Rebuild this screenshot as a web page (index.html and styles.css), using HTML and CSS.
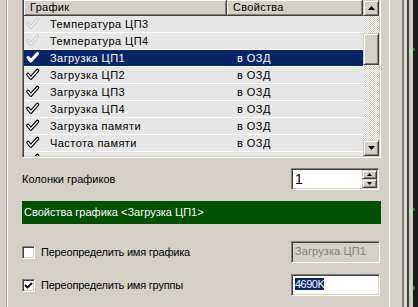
FILE: index.html
```html
<!DOCTYPE html>
<html lang="ru">
<head>
<meta charset="utf-8">
<link rel="stylesheet" href="styles.css">
</head>
<body>
<div class="frame">
  <div class="gutter-left"><div class="gl-shadow"></div><div class="gl-light"></div></div>
  <div class="main">
    <div class="list sunken">
      <div class="grid">
        <div class="head">
          <div class="hc hc1">График</div>
          <div class="hc hc2">Свойства</div>
        </div>
        <div class="row">
          <div class="c1"><svg class="chk dis" viewBox="0 0 16 16"><path class="o" d="M3 7.5 L5.8 11 L12.5 3.5"/><path class="i" d="M3 7.5 L5.8 11 L12.5 3.5"/></svg><span>Температура ЦП3</span></div>
          <div class="c2"></div>
        </div>
        <div class="row">
          <div class="c1"><svg class="chk dis" viewBox="0 0 16 16"><path class="o" d="M3 7.5 L5.8 11 L12.5 3.5"/><path class="i" d="M3 7.5 L5.8 11 L12.5 3.5"/></svg><span>Температура ЦП4</span></div>
          <div class="c2"></div>
        </div>
        <div class="row sel">
          <div class="c1"><svg class="chk on" viewBox="0 0 16 16"><path class="o" d="M3 7.5 L5.8 11 L12.5 3.5"/></svg><span>Загрузка ЦП1</span></div>
          <div class="c2">в ОЗД</div>
        </div>
        <div class="row">
          <div class="c1"><svg class="chk" viewBox="0 0 16 16"><path class="o" d="M3 7.5 L5.8 11 L12.5 3.5"/><path class="i" d="M3 7.5 L5.8 11 L12.5 3.5"/></svg><span>Загрузка ЦП2</span></div>
          <div class="c2">в ОЗД</div>
        </div>
        <div class="row">
          <div class="c1"><svg class="chk" viewBox="0 0 16 16"><path class="o" d="M3 7.5 L5.8 11 L12.5 3.5"/><path class="i" d="M3 7.5 L5.8 11 L12.5 3.5"/></svg><span>Загрузка ЦП3</span></div>
          <div class="c2">в ОЗД</div>
        </div>
        <div class="row">
          <div class="c1"><svg class="chk" viewBox="0 0 16 16"><path class="o" d="M3 7.5 L5.8 11 L12.5 3.5"/><path class="i" d="M3 7.5 L5.8 11 L12.5 3.5"/></svg><span>Загрузка ЦП4</span></div>
          <div class="c2">в ОЗД</div>
        </div>
        <div class="row">
          <div class="c1"><svg class="chk" viewBox="0 0 16 16"><path class="o" d="M3 7.5 L5.8 11 L12.5 3.5"/><path class="i" d="M3 7.5 L5.8 11 L12.5 3.5"/></svg><span>Загрузка памяти</span></div>
          <div class="c2">в ОЗД</div>
        </div>
        <div class="row">
          <div class="c1"><svg class="chk" viewBox="0 0 16 16"><path class="o" d="M3 7.5 L5.8 11 L12.5 3.5"/><path class="i" d="M3 7.5 L5.8 11 L12.5 3.5"/></svg><span>Частота памяти</span></div>
          <div class="c2">в ОЗД</div>
        </div>
        <div class="row">
          <div class="c1"><svg class="chk" viewBox="0 0 16 16"><path class="o" d="M3 7.5 L5.8 11 L12.5 3.5"/><path class="i" d="M3 7.5 L5.8 11 L12.5 3.5"/></svg></div>
          <div class="c2"></div>
        </div>
      </div>
      <div class="vscroll">
        <div class="sbtn raised"><svg viewBox="0 0 7 4" class="arr"><path d="M3.5 0 L7 4 L0 4 Z"/></svg></div>
        <div class="track track-top"></div>
        <div class="thumb raised"></div>
        <div class="track track-fill"></div>
        <div class="sbtn raised"><svg viewBox="0 0 7 4" class="arr"><path d="M0 0 L7 0 L3.5 4 Z"/></svg></div>
      </div>
    </div>

    <div class="field-row spin-row">
      <span class="label">Колонки графиков</span>
      <div class="spin sunken">
        <span class="spin-val">1</span>
        <div class="spin-btns">
          <div class="spbtn raised"><svg viewBox="0 0 5 3" class="sarr"><path d="M2.5 0 L5 3 L0 3 Z"/></svg></div>
          <div class="spbtn raised"><svg viewBox="0 0 5 3" class="sarr"><path d="M0 0 L5 0 L2.5 3 Z"/></svg></div>
        </div>
      </div>
    </div>

    <div class="banner">Свойства графика &lt;Загрузка ЦП1&gt;</div>

    <div class="field-row opt-row first">
      <label class="opt"><span class="cbox sunken"></span><span>Переопределить имя графика</span></label>
      <div class="tbox sunken disabled">Загрузка ЦП1</div>
    </div>
    <div class="field-row opt-row second">
      <label class="opt"><span class="cbox sunken"><svg viewBox="0 0 9 9" class="tick"><path d="M1 4 L3.5 6.5 L8 2"/></svg></span><span>Переопределить имя группы</span></label>
      <div class="tbox sunken"><span class="hl">4690K</span></div>
    </div>
  </div>
  <div class="gutter-right">
    <div class="gr-a"></div>
    <div class="gr-white"></div>
    <div class="gr-b"></div>
    <div class="gr-dark"></div>
    <div class="gr-c"></div>
    <div class="gr-light"></div>
    <div class="gr-d"></div>
    <div class="gr-black"></div>
    <div class="gr-e"></div>
    <div class="gr-win"></div>
  </div>
</div>
</body>
</html>
```

FILE: styles.css
```css
* { box-sizing: border-box; }
html, body {
  margin: 0;
  padding: 0;
  width: 418px;
  height: 307px;
  overflow: hidden;
  background: #d4d0c8;
  font-family: "Liberation Sans", Arial, sans-serif;
  font-size: 11px;
  color: #000;
}
.frame {
  display: flex;
  height: 307px;
}
.gutter-left {
  width: 22px;
  flex: none;
  display: flex;
  padding-left: 6px;
}
.gl-shadow { width: 1px; background: #a8a49c; }
.gl-light { width: 1px; background: #ffffff; }

.main {
  width: 359px;
  flex: none;
  display: flex;
  flex-direction: column;
}

.sunken {
  border: 1px solid;
  border-color: #808080 #ffffff #ffffff #808080;
  box-shadow: inset 1px 1px #404040, inset -1px -1px #d4d0c8;
}
.raised {
  border: 1px solid;
  border-color: #d4d0c8 #404040 #404040 #d4d0c8;
  box-shadow: inset 1px 1px #ffffff, inset -1px -1px #808080;
  background: #d4d0c8;
}

.list {
  margin-top: -2px;
  height: 160px;
  display: flex;
  padding: 1px;
  background: #e6e6e6;
}
.grid {
  flex: 1;
  overflow: hidden;
  display: flex;
  flex-direction: column;
}
.head {
  display: flex;
  height: 16px;
  flex: none;
  background: #d4d0c8;
}
.hc {
  height: 16px;
  line-height: 14px;
  border-right: 1px solid #404040;
  border-bottom: 1px solid #404040;
  box-shadow: inset 1px 1px #ffffff, inset -1px -1px #808080;
  white-space: nowrap;
  letter-spacing: 0.3px;
}
.hc1 { width: 203px; padding-left: 6px; }
.hc2 { flex: 1; padding-left: 6px; }

.row {
  display: flex;
  height: 17px;
  flex: none;
  border-bottom: 1px solid #ffffff;
  background: #e6e6e6;
  line-height: 16px;
  white-space: nowrap;
  letter-spacing: 0.45px;
}
.row.sel { background: #0a246a; color: #ffffff; }
.c1 {
  width: 203px;
  display: flex;
  align-items: center;
  padding-left: 1px;
}
.c1 span { margin-left: 9px; }
.c2 { flex: 1; padding-left: 10px; }

.chk { width: 16px; height: 16px; flex: none; }
.chk path {
  fill: none;
  stroke-linecap: round;
  stroke-linejoin: round;
}
.chk .o { stroke: #000; stroke-width: 3.6; }
.chk .i { stroke: #ffffff; stroke-width: 1.3; }
.chk.dis .o { stroke: #c4c4c4; stroke-width: 3.2; }
.chk.dis .i { stroke: #f4f4f4; stroke-width: 1.3; }
.chk.on .o { stroke: #ffffff; stroke-width: 3.2; }

.vscroll {
  width: 16px;
  flex: none;
  display: flex;
  flex-direction: column;
}
.sbtn {
  height: 16px;
  flex: none;
  display: flex;
  align-items: center;
  justify-content: center;
}
.arr { width: 7px; height: 4px; fill: #000; }
.track {
  background-color: #ffffff;
  background-image: repeating-conic-gradient(#d4d0c8 0 25%, #ffffff 0 50%);
  background-size: 2px 2px;
}
.track-top { height: 17px; flex: none; }
.track-fill { flex: 1; }
.thumb { height: 32px; flex: none; }

.field-row {
  display: flex;
  align-items: center;
  justify-content: space-between;
}
.spin-row {
  margin-top: 10px;
  padding-right: 2px;
}
.label { line-height: 13px; }
.spin {
  width: 88px;
  height: 22px;
  display: flex;
  background: #ffffff;
  padding: 2px;
}
.spin-val {
  flex: 1;
  font-size: 14px;
  line-height: 17px;
  padding-left: 1px;
}
.spin-btns {
  width: 15px;
  display: flex;
  flex-direction: column;
  margin: -1px -1px -1px 0;
}
.spbtn {
  flex: 1;
  display: flex;
  align-items: center;
  justify-content: center;
}
.sarr { width: 5px; height: 3px; fill: #000; }

.banner {
  margin-top: 11px;
  height: 23px;
  background: #005000;
  color: #ffffff;
  font-size: 11px;
  line-height: 23px;
  padding-left: 2px;
  white-space: nowrap;
}

.opt-row.first { margin-top: 17px; }
.opt-row.second { margin-top: 11px; }
.opt-row { padding-right: 1px; }
.opt {
  display: flex;
  align-items: center;
  font-size: 11px;
  letter-spacing: -0.2px;
}
.cbox {
  width: 13px;
  height: 13px;
  background: #ffffff;
  margin-right: 6px;
  display: flex;
  align-items: center;
  justify-content: center;
}
.tick { width: 9px; height: 9px; }
.tick path { fill: none; stroke: #000; stroke-width: 1.8; }
.tbox {
  width: 89px;
  height: 22px;
  background: #ffffff;
  font-size: 11px;
  line-height: 18px;
  padding-left: 3px;
  white-space: nowrap;
}
.tbox.disabled { background: #d4d0c8; color: #808080; letter-spacing: 0.1px; }
.hl { background: #0a246a; color: #ffffff; letter-spacing: -0.5px; }

.gutter-right {
  width: 37px;
  flex: none;
  display: flex;
}
.gr-a { width: 8px; }
.gr-white { width: 1px; background: #ffffff; }
.gr-b { width: 12px; }
.gr-dark { width: 2px; background: #808080; }
.gr-c { width: 1px; }
.gr-light { width: 1px; background: #e8e6e0; }
.gr-d { width: 1px; }
.gr-black { width: 2px; background: #404040; }
.gr-e { width: 4px; }
.gr-win {
  width: 5px;
  background:
    linear-gradient(#1a7a1a, #1a7a1a) 0 48px / 2px 3px no-repeat,
    linear-gradient(#1a7a1a, #1a7a1a) 0 208px / 2px 3px no-repeat,
    linear-gradient(#1a7a1a, #1a7a1a) 0 286px / 2px 4px no-repeat,
    #1c1c1c;
}
```
